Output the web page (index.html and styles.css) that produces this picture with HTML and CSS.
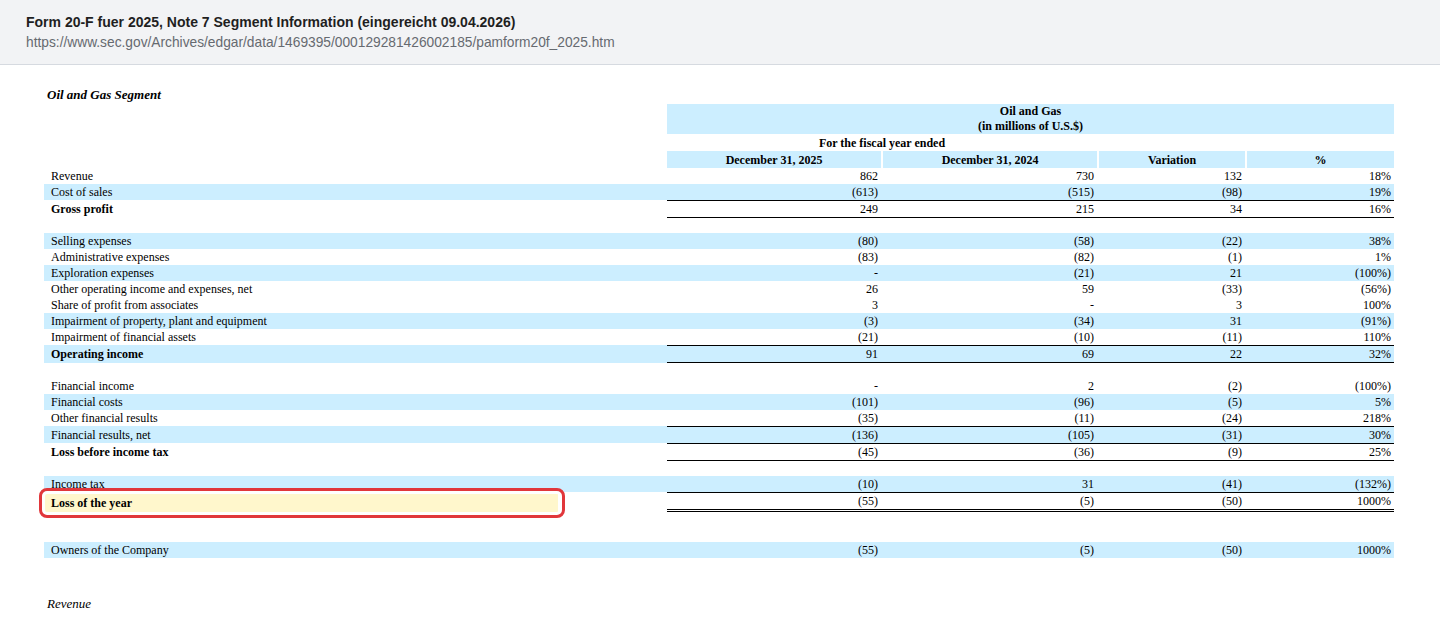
FILE: index.html
```html
<!DOCTYPE html>
<html lang="en">
<head>
<meta charset="utf-8">
<title>Form 20-F Note 7 Segment Information</title>
<link rel="stylesheet" href="styles.css">
</head>
<body>
<header class="topbar">
  <div class="doc-title">Form 20-F fuer 2025, Note 7 Segment Information (eingereicht 09.04.2026)</div>
  <div class="doc-url">https://www.sec.gov/Archives/edgar/data/1469395/000129281426002185/pamform20f_2025.htm</div>
</header>
<main class="content">
  <p class="section-title">Oil and Gas Segment</p>
  <table class="fin">
    <colgroup>
      <col class="c-label"><col class="c-spacer"><col class="c-v1"><col class="c-v2"><col class="c-v3"><col class="c-v4">
    </colgroup>
    <thead>
      <tr class="h1">
        <th></th><th></th>
        <th colspan="4" class="blue">Oil and Gas<br>(in millions of U.S.$)</th>
      </tr>
      <tr class="h2">
        <th></th><th></th>
        <th colspan="2">For the fiscal year ended</th>
        <th></th><th></th>
      </tr>
      <tr class="h3">
        <th></th><th></th>
        <th class="blue">December 31, 2025</th>
        <th class="blue sep">December 31, 2024</th>
        <th class="blue sep">Variation</th>
        <th class="blue sep">%</th>
      </tr>
    </thead>
    <tbody>
      <tr><td class="lbl">Revenue</td><td></td><td class="v">862</td><td class="v">730</td><td class="v">132</td><td class="v">18%</td></tr>
      <tr class="blue"><td class="lbl">Cost of sales</td><td></td><td class="v">(613)</td><td class="v">(515)</td><td class="v">(98)</td><td class="v">19%</td></tr>
      <tr class="ruled-top ruled-bottom"><td class="lbl lbl-bold">Gross profit</td><td></td><td class="v">249</td><td class="v">215</td><td class="v">34</td><td class="v">16%</td></tr>
      <tr class="gap"><td colspan="6"></td></tr>
      <tr class="blue"><td class="lbl">Selling expenses</td><td></td><td class="v">(80)</td><td class="v">(58)</td><td class="v">(22)</td><td class="v">38%</td></tr>
      <tr><td class="lbl">Administrative expenses</td><td></td><td class="v">(83)</td><td class="v">(82)</td><td class="v">(1)</td><td class="v">1%</td></tr>
      <tr class="blue"><td class="lbl">Exploration expenses</td><td></td><td class="v">-</td><td class="v">(21)</td><td class="v">21</td><td class="v">(100%)</td></tr>
      <tr><td class="lbl">Other operating income and expenses, net</td><td></td><td class="v">26</td><td class="v">59</td><td class="v">(33)</td><td class="v">(56%)</td></tr>
      <tr><td class="lbl">Share of profit from associates</td><td></td><td class="v">3</td><td class="v">-</td><td class="v">3</td><td class="v">100%</td></tr>
      <tr class="blue"><td class="lbl">Impairment of property, plant and equipment</td><td></td><td class="v">(3)</td><td class="v">(34)</td><td class="v">31</td><td class="v">(91%)</td></tr>
      <tr><td class="lbl">Impairment of financial assets</td><td></td><td class="v">(21)</td><td class="v">(10)</td><td class="v">(11)</td><td class="v">110%</td></tr>
      <tr class="blue ruled-top ruled-bottom"><td class="lbl lbl-bold">Operating income</td><td></td><td class="v">91</td><td class="v">69</td><td class="v">22</td><td class="v">32%</td></tr>
      <tr class="gap"><td colspan="6"></td></tr>
      <tr><td class="lbl">Financial income</td><td></td><td class="v">-</td><td class="v">2</td><td class="v">(2)</td><td class="v">(100%)</td></tr>
      <tr class="blue"><td class="lbl">Financial costs</td><td></td><td class="v">(101)</td><td class="v">(96)</td><td class="v">(5)</td><td class="v">5%</td></tr>
      <tr><td class="lbl">Other financial results</td><td></td><td class="v">(35)</td><td class="v">(11)</td><td class="v">(24)</td><td class="v">218%</td></tr>
      <tr class="blue ruled-top"><td class="lbl">Financial results, net</td><td></td><td class="v">(136)</td><td class="v">(105)</td><td class="v">(31)</td><td class="v">30%</td></tr>
      <tr class="ruled-top ruled-bottom"><td class="lbl lbl-bold">Loss before income tax</td><td></td><td class="v">(45)</td><td class="v">(36)</td><td class="v">(9)</td><td class="v">25%</td></tr>
      <tr class="gap"><td colspan="6"></td></tr>
      <tr class="blue"><td class="lbl">Income tax</td><td></td><td class="v">(10)</td><td class="v">31</td><td class="v">(41)</td><td class="v">(132%)</td></tr>
      <tr class="ruled-top double-bottom"><td class="lbl lbl-bold highlight">Loss of the year</td><td></td><td class="v">(55)</td><td class="v">(5)</td><td class="v">(50)</td><td class="v">1000%</td></tr>
      <tr class="gap"><td colspan="6"></td></tr>
      <tr class="gap"><td colspan="6"></td></tr>
      <tr class="blue"><td class="lbl">Owners of the Company</td><td></td><td class="v">(55)</td><td class="v">(5)</td><td class="v">(50)</td><td class="v">1000%</td></tr>
    </tbody>
  </table>
  <p class="section-title next">Revenue</p>
</main>
</body>
</html>
```

FILE: styles.css
```css
html, body {
  margin: 0;
  padding: 0;
  background: #ffffff;
}

.topbar {
  background: #f2f3f5;
  border-bottom: 1px solid #d6dae0;
  padding: 13px 26px 12px;
  font-family: "Liberation Sans", Arial, sans-serif;
}

.doc-title {
  font-size: 14px;
  line-height: 18px;
  font-weight: bold;
  color: #1f1f1f;
}

.doc-url {
  margin-top: 3px;
  font-size: 13.75px;
  line-height: 18px;
  color: #666a70;
}

.content {
  padding: 22px 0 0 44px;
  font-family: "Liberation Serif", "Times New Roman", serif;
  color: #000000;
}

.section-title {
  margin: 0;
  padding-left: 3px;
  font-size: 13px;
  line-height: 16px;
  font-style: italic;
  font-weight: bold;
}

.section-title.next {
  margin-top: 38px;
  font-weight: normal;
}

.fin {
  width: 1350px;
  margin-top: 1px;
  table-layout: fixed;
  border-collapse: separate;
  border-spacing: 0;
  font-size: 12px;
  line-height: 16px;
}

.c-label { width: 514px; }
.c-spacer { width: 109px; }
.c-v1 { width: 214px; }
.c-v2 { width: 216px; }
.c-v3 { width: 148px; }
.c-v4 { width: 149px; }

.fin th,
.fin td {
  padding: 0;
  vertical-align: middle;
}

.fin th {
  font-weight: bold;
  text-align: center;
}

.h1 th {
  height: 30px;
  line-height: 15px;
}

.h2 th,
.h3 th {
  height: 17px;
}

.fin .blue,
.fin tr.blue td {
  background: #cceeff;
}

.h3 th.sep {
  border-left: 2px solid #ffffff;
}

.fin td {
  height: 16px;
}

.lbl {
  padding-left: 7px !important;
  white-space: nowrap;
}

.lbl-bold {
  font-weight: bold;
}

.v {
  text-align: right;
  padding-right: 3px !important;
}

tr.ruled-top td.v {
  border-top: 1px solid #000000;
}

tr.ruled-bottom td.v {
  border-bottom: 1px solid #000000;
}

tr.double-bottom td.v {
  border-bottom: 3px double #000000;
}

tr.gap td {
  height: 15px;
}

.highlight {
  position: relative;
  background: #fff7cc;
  background-clip: padding-box;
  border-top: 1px solid transparent;
}

.highlight::after {
  content: "";
  position: absolute;
  top: -5px;
  bottom: -6px;
  left: -5px;
  right: -7px;
  border: 3px solid #e1373b;
  border-radius: 8px;
  box-shadow: inset 0 0 0 3px #ffffff;
  pointer-events: none;
}
```
